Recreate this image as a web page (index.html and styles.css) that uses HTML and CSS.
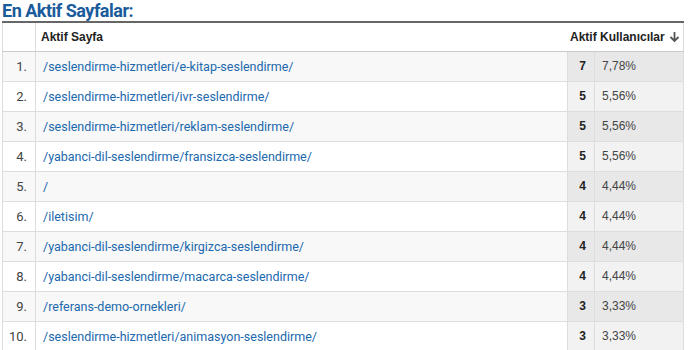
FILE: index.html
```html
<!DOCTYPE html>
<html lang="tr">
<head>
<meta charset="utf-8">
<link rel="stylesheet" href="styles.css">
</head>
<body>
<div class="wrap">
  <h2 class="title">En Aktif Sayfalar:</h2>
  <table class="tbl">
    <colgroup>
      <col class="c-idx"><col class="c-page"><col class="c-cnt"><col class="c-pct">
    </colgroup>
    <thead>
      <tr>
        <th class="h-idx"></th>
        <th class="h-page">Aktif Sayfa</th>
        <th class="h-users" colspan="2">Aktif Kullanıcılar <svg class="arrow" width="11" height="12" viewBox="0 0 11 12"><path d="M5.5 1v9M1.5 6l4 4 4-4" fill="none" stroke="#555" stroke-width="1.8"/></svg></th>
      </tr>
    </thead>
    <tbody>
      <tr class="odd"><td class="idx">1.</td><td class="page"><a>/seslendirme-hizmetleri/e-kitap-seslendirme/</a></td><td class="cnt">7</td><td class="pct">7,78%</td></tr>
      <tr><td class="idx">2.</td><td class="page"><a>/seslendirme-hizmetleri/ivr-seslendirme/</a></td><td class="cnt">5</td><td class="pct">5,56%</td></tr>
      <tr class="odd"><td class="idx">3.</td><td class="page"><a>/seslendirme-hizmetleri/reklam-seslendirme/</a></td><td class="cnt">5</td><td class="pct">5,56%</td></tr>
      <tr><td class="idx">4.</td><td class="page"><a>/yabanci-dil-seslendirme/fransizca-seslendirme/</a></td><td class="cnt">5</td><td class="pct">5,56%</td></tr>
      <tr class="odd"><td class="idx">5.</td><td class="page"><a>/</a></td><td class="cnt">4</td><td class="pct">4,44%</td></tr>
      <tr><td class="idx">6.</td><td class="page"><a>/iletisim/</a></td><td class="cnt">4</td><td class="pct">4,44%</td></tr>
      <tr class="odd"><td class="idx">7.</td><td class="page"><a>/yabanci-dil-seslendirme/kirgizca-seslendirme/</a></td><td class="cnt">4</td><td class="pct">4,44%</td></tr>
      <tr><td class="idx">8.</td><td class="page"><a>/yabanci-dil-seslendirme/macarca-seslendirme/</a></td><td class="cnt">4</td><td class="pct">4,44%</td></tr>
      <tr class="odd"><td class="idx">9.</td><td class="page"><a>/referans-demo-ornekleri/</a></td><td class="cnt">3</td><td class="pct">3,33%</td></tr>
      <tr><td class="idx">10.</td><td class="page"><a>/seslendirme-hizmetleri/animasyon-seslendirme/</a></td><td class="cnt">3</td><td class="pct">3,33%</td></tr>
    </tbody>
  </table>
</div>
</body>
</html>
```

FILE: styles.css
```css
* { box-sizing: border-box; }
html, body { margin: 0; padding: 0; background: #fff; }
.wrap { padding: 0 9px 0 2px; }
.title {
  margin: 0;
  height: 21px;
  font-family: Roboto, "Liberation Sans", sans-serif;
  font-weight: 700;
  font-size: 18px;
  line-height: 21px;
  letter-spacing: -0.5px;
  color: #1a5b9c;
}
.tbl {
  width: 682px;
  border-collapse: collapse;
  table-layout: fixed;
  border-top: 2px solid #666;
  border-left: 1px solid #ddd;
  border-right: 1px solid #ddd;
  font-family: Roboto, "Liberation Sans", sans-serif;
  font-size: 12.5px;
}
.c-idx { width: 33px; }
.c-cnt { width: 27px; }
.c-pct { width: 89px; }
.tbl th {
  height: 29px;
  padding: 0;
  border-bottom: 1px solid #ccc;
  font-family: "Liberation Sans", Arial, sans-serif;
  font-weight: 700;
  font-size: 12px;
  color: #222;
  vertical-align: middle;
}
.h-idx { border-right: 1px solid #ddd; }
.h-page { text-align: left; padding-left: 5px !important; }
.h-users { text-align: right; padding-right: 3px !important; white-space: nowrap; }
.arrow { vertical-align: -2px; margin-left: 1px; }
.tbl td {
  height: 30px;
  padding: 0;
  border-bottom: 1px solid #ddd;
  vertical-align: middle;
  white-space: nowrap;
}
.tbl tr.odd td { background: #f8f8f8; }
.idx {
  text-align: right;
  padding-right: 8px !important;
  color: #444;
  border-right: 1px solid #ddd;
  font-family: Roboto, "Liberation Sans", sans-serif;
  font-size: 13px;
}
.page { padding-left: 7px !important; }
.page a { color: #2068ad; text-decoration: none; }
.tbl td.cnt {
  text-align: right;
  padding-right: 8px;
  font-family: "Liberation Sans", Arial, sans-serif;
  font-weight: 700;
  font-size: 12px;
  color: #222;
  background: #f2f2f2;
  border-left: 1px solid #ddd;
  border-right: 1px solid #ddd;
}
.tbl td.pct {
  padding-left: 7px;
  font-family: "Liberation Sans", Arial, sans-serif;
  font-size: 12px;
  color: #444;
  background: #f2f2f2;
}
.tbl tr.odd td.cnt, .tbl tr.odd td.pct { background: #e8e8e8; }
```
